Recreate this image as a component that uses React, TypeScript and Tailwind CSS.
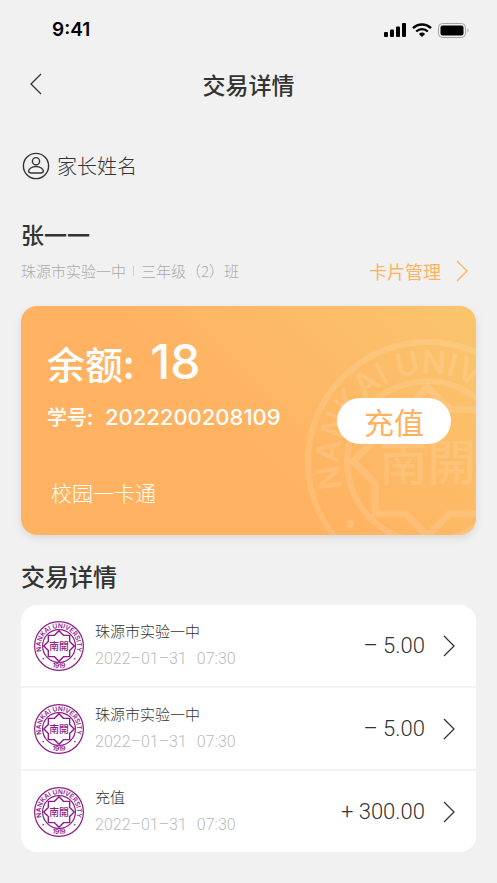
import { useId } from "react";

const transactions = [
  { id: 1, title: "珠源市实验一中", time: "2022–01–31", clock: "07:30", amount: "– 5.00" },
  { id: 2, title: "珠源市实验一中", time: "2022–01–31", clock: "07:30", amount: "– 5.00" },
  { id: 3, title: "充值", time: "2022–01–31", clock: "07:30", amount: "+ 300.00" },
];

const Chevron = ({ left = false, className = "" }: { left?: boolean; className?: string }) => (
  <svg
    viewBox="0 0 12 22"
    className={`w-3 h-[22px] shrink-0 ${className}`}
    fill="none"
    stroke="currentColor"
    strokeWidth="1.3"
    aria-hidden="true"
  >
    <path d={left ? "M11 1 L1 11 L11 21" : "M1 1 L11 11 L1 21"} />
  </svg>
);

// University seal: two rings, an eight-pointed star and lettering on the ring
const Seal = ({ className = "" }: { className?: string }) => {
  const id = useId();
  return (
    <svg viewBox="0 0 244 244" className={className} fill="none" stroke="currentColor" aria-hidden="true">
      <circle cx="122" cy="122" r="119" strokeWidth="6" />
      <circle cx="122" cy="122" r="80" strokeWidth="6" />
      <path
        strokeWidth="7"
        d="M122 48 L144 70 H174 V100 L196 122 L174 144 V174 H144 L122 196 L100 174 H70 V144 L48 122 L70 100 V70 H100 Z"
      />
      <defs>
        <path id={`${id}top`} d="M43 161 A88 88 0 1 1 201 161" />
        <path id={`${id}bottom`} d="M14 122 A108 108 0 0 0 230 122" />
      </defs>
      <g fill="currentColor" stroke="none" fontFamily="Inter, sans-serif" fontWeight="600">
        <text fontSize="32" textAnchor="middle">
          <textPath href={`#${id}top`} startOffset="50%">NANKAI UNIVERSITY</textPath>
        </text>
        <text fontSize="33" textAnchor="middle">
          <textPath href={`#${id}bottom`} startOffset="50%">1919</textPath>
        </text>
        <circle cx="45" cy="184" r="4" />
        <circle cx="199" cy="184" r="4" />
        <text x="122" y="140" fontSize="48" fontWeight="500" textAnchor="middle" fontFamily="'Noto Sans CJK TC', sans-serif">
          南開
        </text>
      </g>
    </svg>
  );
};

const StatusBar = () => (
  <div className="flex items-center justify-between h-15 pl-[52px] pr-7 text-black">
    <span className="font-['Inter'] text-[19px] leading-6 font-semibold">9:41</span>
    <div className="flex items-center gap-1.5">
      <svg viewBox="0 0 22 14" className="w-[22px] h-3.5" fill="currentColor" aria-hidden="true">
        <rect x="0" y="9" width="4" height="5" rx="1" />
        <rect x="6" y="6.5" width="4" height="7.5" rx="1" />
        <rect x="12" y="3.5" width="4" height="10.5" rx="1" />
        <rect x="18" y="0" width="4" height="14" rx="1" />
      </svg>
      <svg viewBox="0 0 20 14" className="w-5 h-3.5" fill="none" stroke="currentColor" aria-hidden="true">
        <path d="M1 5.2 A12.7 12.7 0 0 1 19 5.2" strokeWidth="2.4" />
        <path d="M4.2 8.5 A8.2 8.2 0 0 1 15.8 8.5" strokeWidth="2.3" />
        <path d="M10 14 L6.9 10.9 A4.4 4.4 0 0 1 13.1 10.9 Z" fill="currentColor" stroke="none" />
      </svg>
      <svg viewBox="0 0 31 15" className="w-[31px] h-[15px]" fill="none" aria-hidden="true">
        <rect x="0.5" y="0.5" width="27" height="14" rx="4" stroke="#a3a3a3" />
        <rect x="2.5" y="2.5" width="23" height="10" rx="2" fill="currentColor" />
        <path d="M29.5 5.5 C31 6 31 9 29.5 9.5 Z" fill="#a3a3a3" />
      </svg>
    </div>
  </div>
);

const BalanceCard = () => (
  <section className="relative overflow-hidden mt-5 rounded-[16px] pl-[26px] pr-[25px] pt-[30px] pb-[27px] text-white bg-linear-45 from-[#ffb261] from-45% to-[#fac56d] shadow-[0_3px_8px_rgba(0,0,0,0.1)]">
    <Seal className="absolute top-[33px] -right-[74px] w-[245px] h-[245px] text-white/12" />
    <p className="relative flex items-center gap-4 h-[52px] text-[38px] font-medium">
      <span>余额:</span>
      <span className="font-['Inter'] text-[48px]">18</span>
    </p>
    <div className="relative flex items-start justify-between mt-1.5">
      <p className="flex items-center gap-3 h-[46px] text-[20px] font-medium">
        <span>学号:</span>
        <span className="font-['Inter'] text-[22px]">2022200208109</span>
      </p>
      <button type="button" className="mt-1 w-[114px] h-[46px] rounded-full bg-white text-[#ffb15f] text-[30px] leading-[44px]">
        充值
      </button>
    </div>
    <p className="relative mt-8 pl-1 text-[21px] leading-8 font-light">校园一卡通</p>
  </section>
);

export default function App() {
  return (
    <div className="min-h-screen bg-[#f1f1f1] pb-8 text-[#333] font-['Noto_Sans_CJK_SC',sans-serif]">
      <StatusBar />

      {/* Header */}
      <header className="grid grid-cols-[1fr_auto_1fr] items-center h-12 px-[30px]">
        <button type="button" aria-label="返回" className="justify-self-start">
          <Chevron left />
        </button>
        <h1 className="text-[23px] leading-8 font-medium">交易详情</h1>
      </header>

      <main className="px-[21px]">
        <div className="flex items-center gap-[7px] h-8 mt-[42px] pl-px">
          <svg viewBox="0 0 28 28" className="w-7 h-7" fill="none" stroke="currentColor" strokeWidth="1.4" aria-hidden="true">
            <circle cx="14" cy="14" r="12.6" />
            <circle cx="14" cy="9.2" r="3.6" />
            <path d="M14 14.5 C10 14.5 6.6 16.8 6.6 19.3 C6.6 20.7 7.8 21 9.5 21 H18.5 C20.2 21 21.4 20.7 21.4 19.3 C21.4 16.8 18 14.5 14 14.5 Z" />
          </svg>
          <span className="text-[20px] font-light">家长姓名</span>
        </div>

        <h2 className="mt-9 text-[23px] leading-8 font-medium">张一一</h2>
        <div className="flex items-center justify-between h-[30px] mt-1.5">
          <p className="flex items-center gap-[7px] text-[15px] font-light text-[#aaa]">
            <span>珠源市实验一中</span>
            <span className="w-px h-2.5 bg-[#ccc]" />
            <span>三年级（2）班</span>
          </p>
          <a href="#manage" className="flex items-center gap-[15px] pr-2 text-[18px] text-[#ffb15f]">
            卡片管理
            <Chevron />
          </a>
        </div>

        <BalanceCard />

        <h2 className="mt-[25px] text-[24px] leading-8 font-medium">交易详情</h2>
        <ul className="mt-[13px] rounded-[16px] bg-white divide-y-2 divide-[#f3f3f3] overflow-hidden">
          {transactions.map((item) => (
            <li key={item.id}>
              <a href={`#transaction-${item.id}`} className="flex items-center h-[81px] pl-[13px] pr-[21px]">
                <Seal className="w-[50px] h-[50px] shrink-0 text-[#8f1d88]" />
                <div className="ml-[11px] pb-0.5 flex-1">
                  <p className="text-[15px] leading-6 font-light">{item.title}</p>
                  <p className="flex gap-2.5 mt-1 font-['Roboto'] text-[16px] leading-6 font-light text-[#bbb]">
                    <span>{item.time}</span>
                    <span>{item.clock}</span>
                  </p>
                </div>
                <span className="mr-[18px] font-['Roboto'] text-[22px] font-light">{item.amount}</span>
                <Chevron />
              </a>
            </li>
          ))}
        </ul>
      </main>
    </div>
  );
}
